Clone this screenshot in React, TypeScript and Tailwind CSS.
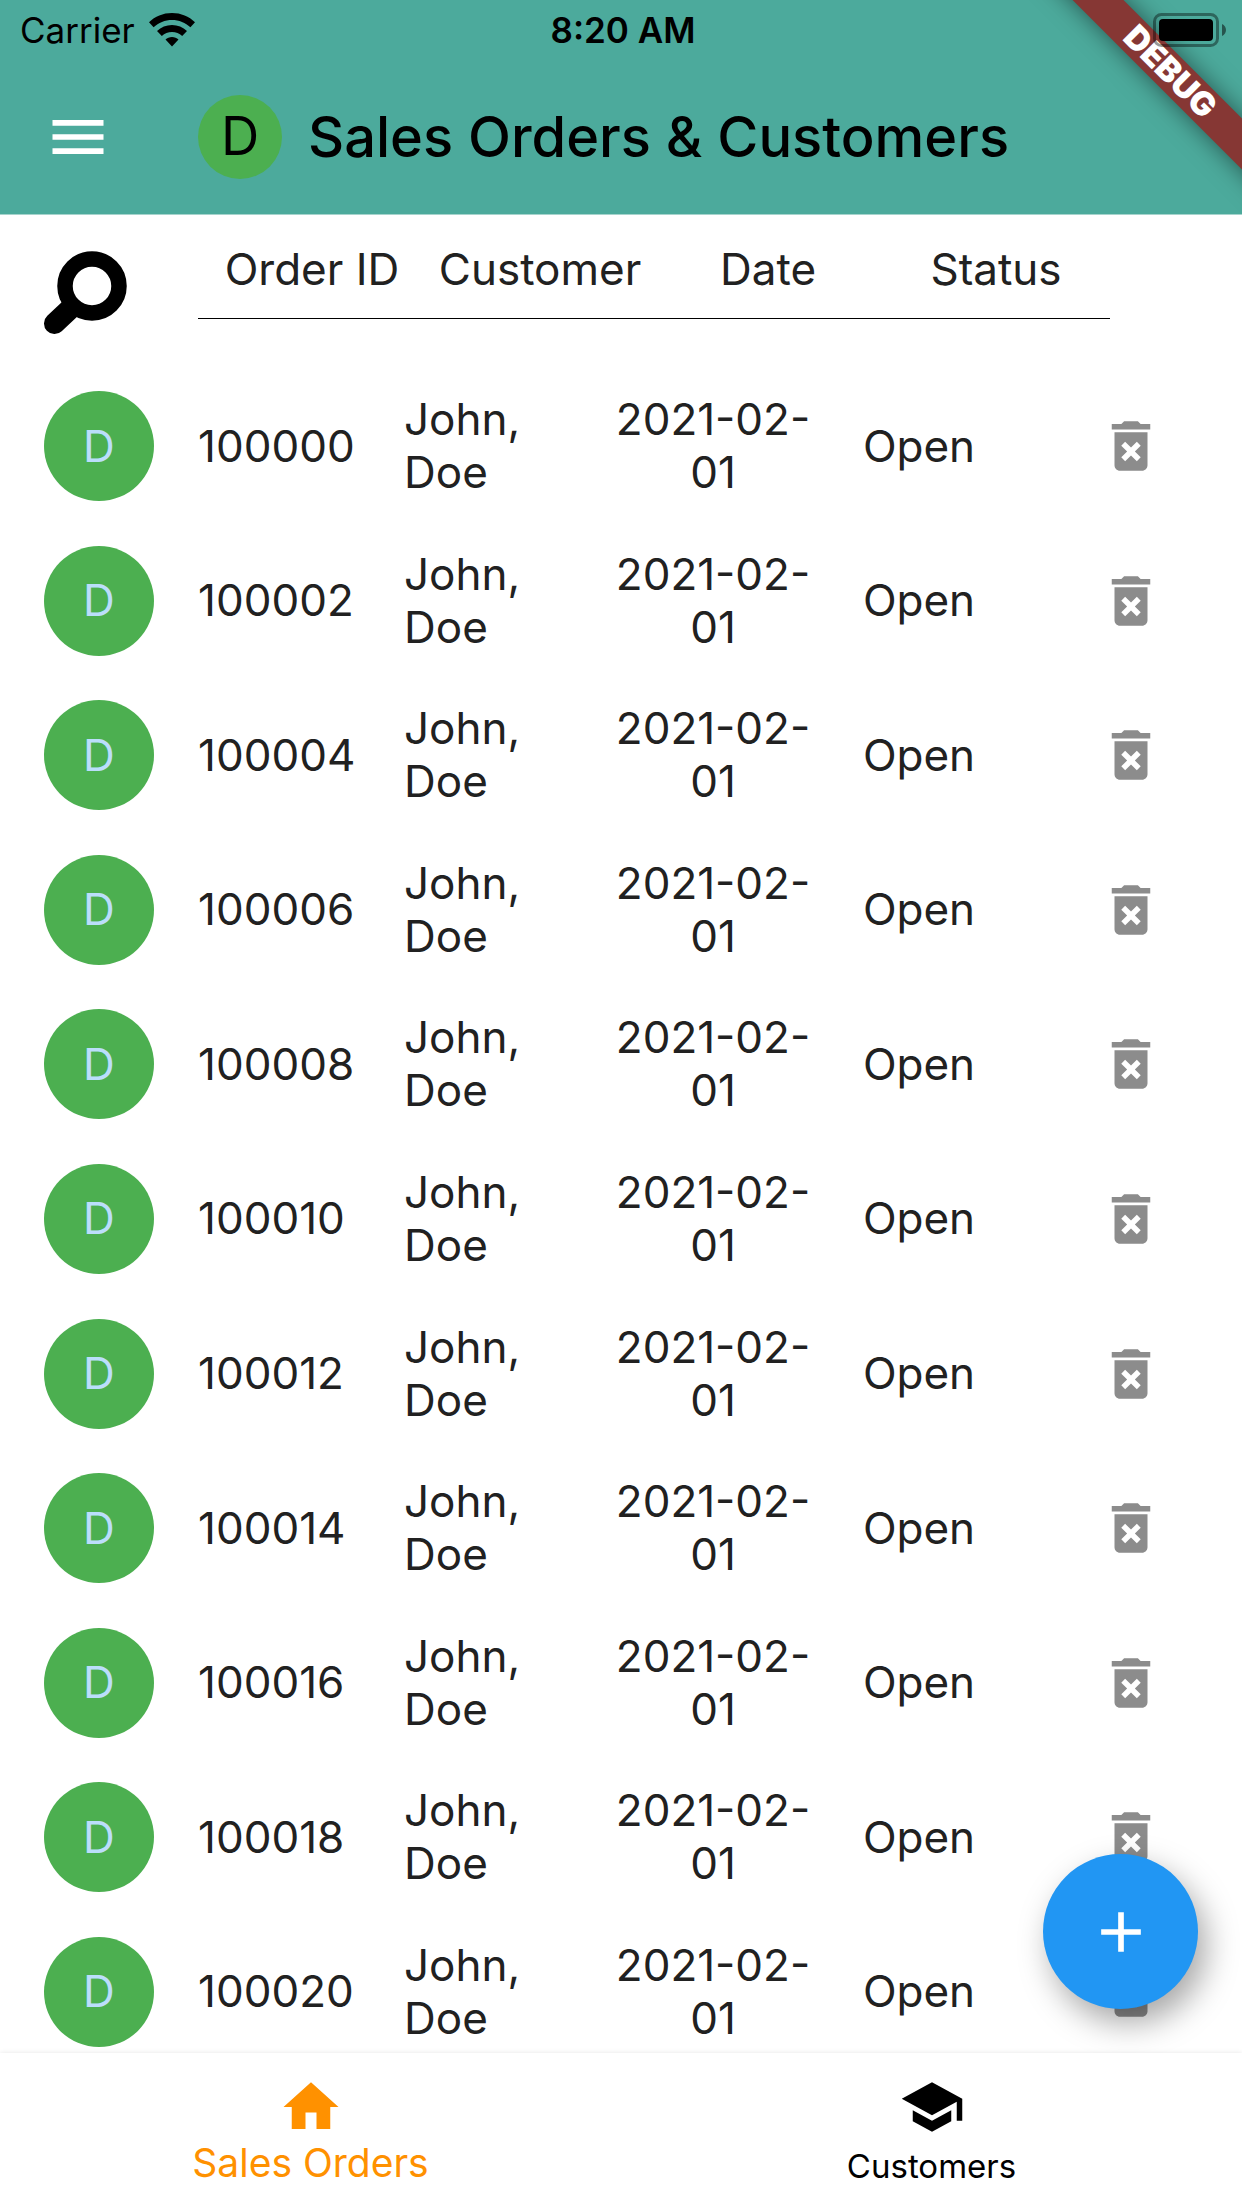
import { MdDeleteForever, MdHome, MdMenu, MdSchool, MdAdd } from "react-icons/md";

const orders = [0, 2, 4, 6, 8, 10, 12, 14, 16, 18, 20].map((n) => ({
  id: String(100000 + n),
  customer: "John, Doe",
  date: "2021-02-01",
  status: "Open",
}));

function StatusBar() {
  return (
    <div className="grid h-[60px] grid-cols-3 items-center pr-4 pl-5 text-[35px] leading-[40px]">
      <div className="flex items-center gap-[14px]">
        <span>Carrier</span>
        <svg viewBox="0 0 46 34" className="h-[34px] w-[46px]" aria-label="Wi-Fi">
          <path
            d="M23 0C14 0 6 3.400 0 9.300L4.600 14.200C9.500 9.600 16 6.900 23 6.900S36.500 9.600 41.400 14.200L46 9.300C40 3.400 32 0 23 0Z M23 12C17.300 12 12 14.200 8 18L12.800 22.900C15.600 20.400 19.100 18.900 23 18.900S30.400 20.400 33.200 22.900L38 18C34 14.200 28.700 12 23 12Z M23 24C20.500 24 18.200 24.900 16.500 26.500L23 33.500L29.500 26.500C27.800 24.900 25.500 24 23 24Z"
            fill="#000"
          />
        </svg>
      </div>
      <span className="text-center font-semibold">8:20 AM</span>
      <svg viewBox="0 0 74 34" className="relative z-20 h-[34px] w-[74px] justify-self-end" aria-label="Battery">
        <rect x="2.500" y="1.500" width="63" height="31" rx="7" fill="none" stroke="#000" strokeOpacity="0.400" strokeWidth="3" />
        <rect x="7" y="6" width="54" height="22" rx="4" fill="#000" />
        <path d="M70 11C72.500 12 74 14.500 74 17S72.500 22 70 23Z" fill="#000" fillOpacity="0.500" />
      </svg>
    </div>
  );
}

function SearchIcon() {
  return (
    <svg viewBox="0 0 84 84" className="h-[84px] w-[84px]">
      <circle cx="48" cy="35" r="27" fill="none" stroke="#000" strokeWidth="15.500" />
      <path d="M27 57L10.500 72.500" stroke="#000" strokeWidth="21" strokeLinecap="round" />
    </svg>
  );
}

export default function App() {
  return (
    <div className="flex h-screen flex-col overflow-hidden bg-white font-['Inter',sans-serif] text-black">
      <header className="relative h-[215px] shrink-0 overflow-hidden border-b border-[#a6d4cd] bg-[#4caa9c]">
        <StatusBar />
        <div className="flex h-[154px] items-center pl-11">
          <button aria-label="Menu" className="w-[154px] text-white">
            <MdMenu className="size-[68px]" />
          </button>
          <span className="flex size-[84px] items-center justify-center rounded-full bg-[#4caf50] text-[53px]">D</span>
          <h1 className="ml-[26px] text-[56px] font-medium whitespace-nowrap">Sales Orders &amp; Customers</h1>
        </div>
        <div className="absolute top-[54px] right-[-93px] z-10 flex h-9 w-[330px] rotate-45 items-center justify-center bg-[#863734] text-[33px] font-black text-white shadow-[0_0_24px_rgba(0,0,0,0.5)]">
          DEBUG
        </div>
      </header>

      <main className="relative flex min-h-0 flex-1 flex-col">
        <table className="flex min-h-0 flex-1 flex-col text-[44px] leading-[53px] text-[#212121]">
          <thead className="block h-[154px] shrink-0">
            <tr className="flex pl-11">
              <th className="flex w-[154px] pt-9 font-normal">
                <button aria-label="Search" className="h-[84px]">
                  <SearchIcon />
                </button>
              </th>
              <th className="h-[104px] flex-1 border-b border-black pt-7 font-normal">Order ID</th>
              <th className="h-[104px] flex-1 border-b border-black pt-7 font-normal">Customer</th>
              <th className="h-[104px] flex-1 border-b border-black pt-7 font-normal">Date</th>
              <th className="mr-[132px] h-[104px] flex-1 border-b border-black pt-7 font-normal">Status</th>
            </tr>
          </thead>
          <tbody className="-mb-4 grid flex-1 auto-rows-fr">
            {orders.map((order) => (
              <tr key={order.id} className="grid grid-cols-[154px_1fr_1fr_1fr_1fr_146px] items-center pr-[74px] pl-11">
                <td>
                  <span className="flex size-[110px] items-center justify-center rounded-full bg-[#4caf50] text-[#bbdefb]">D</span>
                </td>
                <td>{order.id}</td>
                <td className="pr-16">{order.customer}</td>
                <td className="text-center">{order.date}</td>
                <td className="text-center">{order.status}</td>
                <td className="flex justify-end pr-1">
                  <button aria-label={"Delete order " + order.id} className="text-[#8c8c8c]">
                    <MdDeleteForever className="size-[66px]" />
                  </button>
                </td>
              </tr>
            ))}
          </tbody>
        </table>
        <button
          aria-label="Add order"
          className="absolute right-11 bottom-11 flex size-[155px] items-center justify-center rounded-full bg-[#2196f3] text-white shadow-[8px_14px_32px_rgba(0,0,0,0.35)]"
        >
          <MdAdd className="size-[68px]" />
        </button>
      </main>

      <nav className="z-10 grid h-[155px] shrink-0 grid-cols-2 bg-white shadow-[0_0_5px_rgba(0,0,0,0.1)]">
        <a href="#orders" className="flex flex-col items-center pt-[21px] text-[39px] leading-[46px] text-[#ff9100]">
          <MdHome className="size-[66px]" />
          Sales Orders
        </a>
        <a href="#customers" className="flex flex-col items-center pt-[21px] text-[33px] leading-[52px]">
          <MdSchool className="size-[66px]" />
          Customers
        </a>
      </nav>
    </div>
  );
}
